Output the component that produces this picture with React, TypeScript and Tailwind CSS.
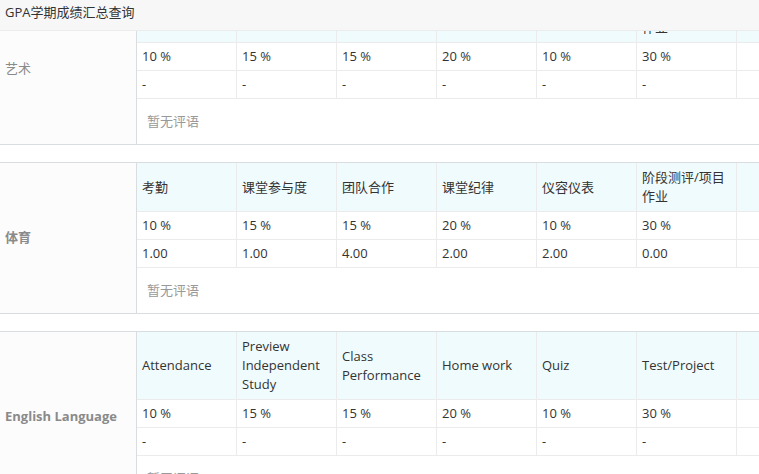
const font = { fontFamily: '"Open Sans", "Noto Sans CJK SC", sans-serif' };

type Subject = {
  name: string;
  bold: boolean;
  headers: string[];
  weights: string[];
  scores: string[];
};

const cnHeaders = ['考勤', '课堂参与度', '团队合作', '课堂纪律', '仪容仪表', '阶段测评/项目作业', ''];
const weights = ['10 %', '15 %', '15 %', '20 %', '10 %', '30 %', ''];

const subjects: Subject[] = [
  { name: '艺术', bold: false, headers: cnHeaders, weights, scores: ['-', '-', '-', '-', '-', '-', ''] },
  { name: '体育', bold: true, headers: cnHeaders, weights, scores: ['1.00', '1.00', '4.00', '2.00', '2.00', '0.00', ''] },
  {
    name: 'English Language',
    bold: true,
    headers: ['Attendance', 'Preview Independent Study', 'Class Performance', 'Home work', 'Quiz', 'Test/Project', ''],
    weights,
    scores: ['-', '-', '-', '-', '-', '-', ''],
  },
];

function SubjectBlock({ s }: { s: Subject }) {
  return (
    <div className="flex w-[836px] border-y border-[#d9dde0] mb-[17px]">
      <div
        className={`w-[137px] shrink-0 flex items-center pl-[5px] bg-[#fcfcfc] border-r border-[#d9dde0] text-[13px] text-[#8a8a8a] ${
          s.bold ? 'font-bold' : 'font-normal'
        }`}
      >
        {s.name}
      </div>
      <div className="w-[700px]">
        <div className="grid grid-cols-[repeat(7,100px)] bg-[#f0fbfd]">
          {s.headers.map((h, i) => (
            <div
              key={i}
              className="px-[5px] py-[5px] border-r border-b border-[#ebebeb] text-[13px] leading-[19px] text-[#333] flex items-center"
            >
              {h}
            </div>
          ))}
        </div>
        {[s.weights, s.scores].map((row, r) => (
          <div key={r} className="grid grid-cols-[repeat(7,100px)]">
            {row.map((c, i) => (
              <div
                key={i}
                className="h-[28px] px-[5px] border-r border-b border-[#ebebeb] text-[13px] leading-[27px] text-[#333]"
              >
                {c}
              </div>
            ))}
          </div>
        ))}
        <div className="h-[45px] pl-[10px] flex items-center text-[13px] text-[#999]">暂无评语</div>
      </div>
    </div>
  );
}

export default function App() {
  return (
    <div className="w-full h-[474px] overflow-hidden bg-white flex flex-col" style={font}>
      <div className="h-[31px] shrink-0 bg-[#f7f7f7] border-b border-[#ececec] pl-[5px] text-[13px] leading-[24px] text-[#333]">
        GPA学期成绩汇总查询
      </div>
      <div className="flex-1 overflow-hidden">
        <div className="-mt-[38px]">
          {subjects.map((s) => (
            <SubjectBlock key={s.name} s={s} />
          ))}
        </div>
      </div>
    </div>
  );
}
